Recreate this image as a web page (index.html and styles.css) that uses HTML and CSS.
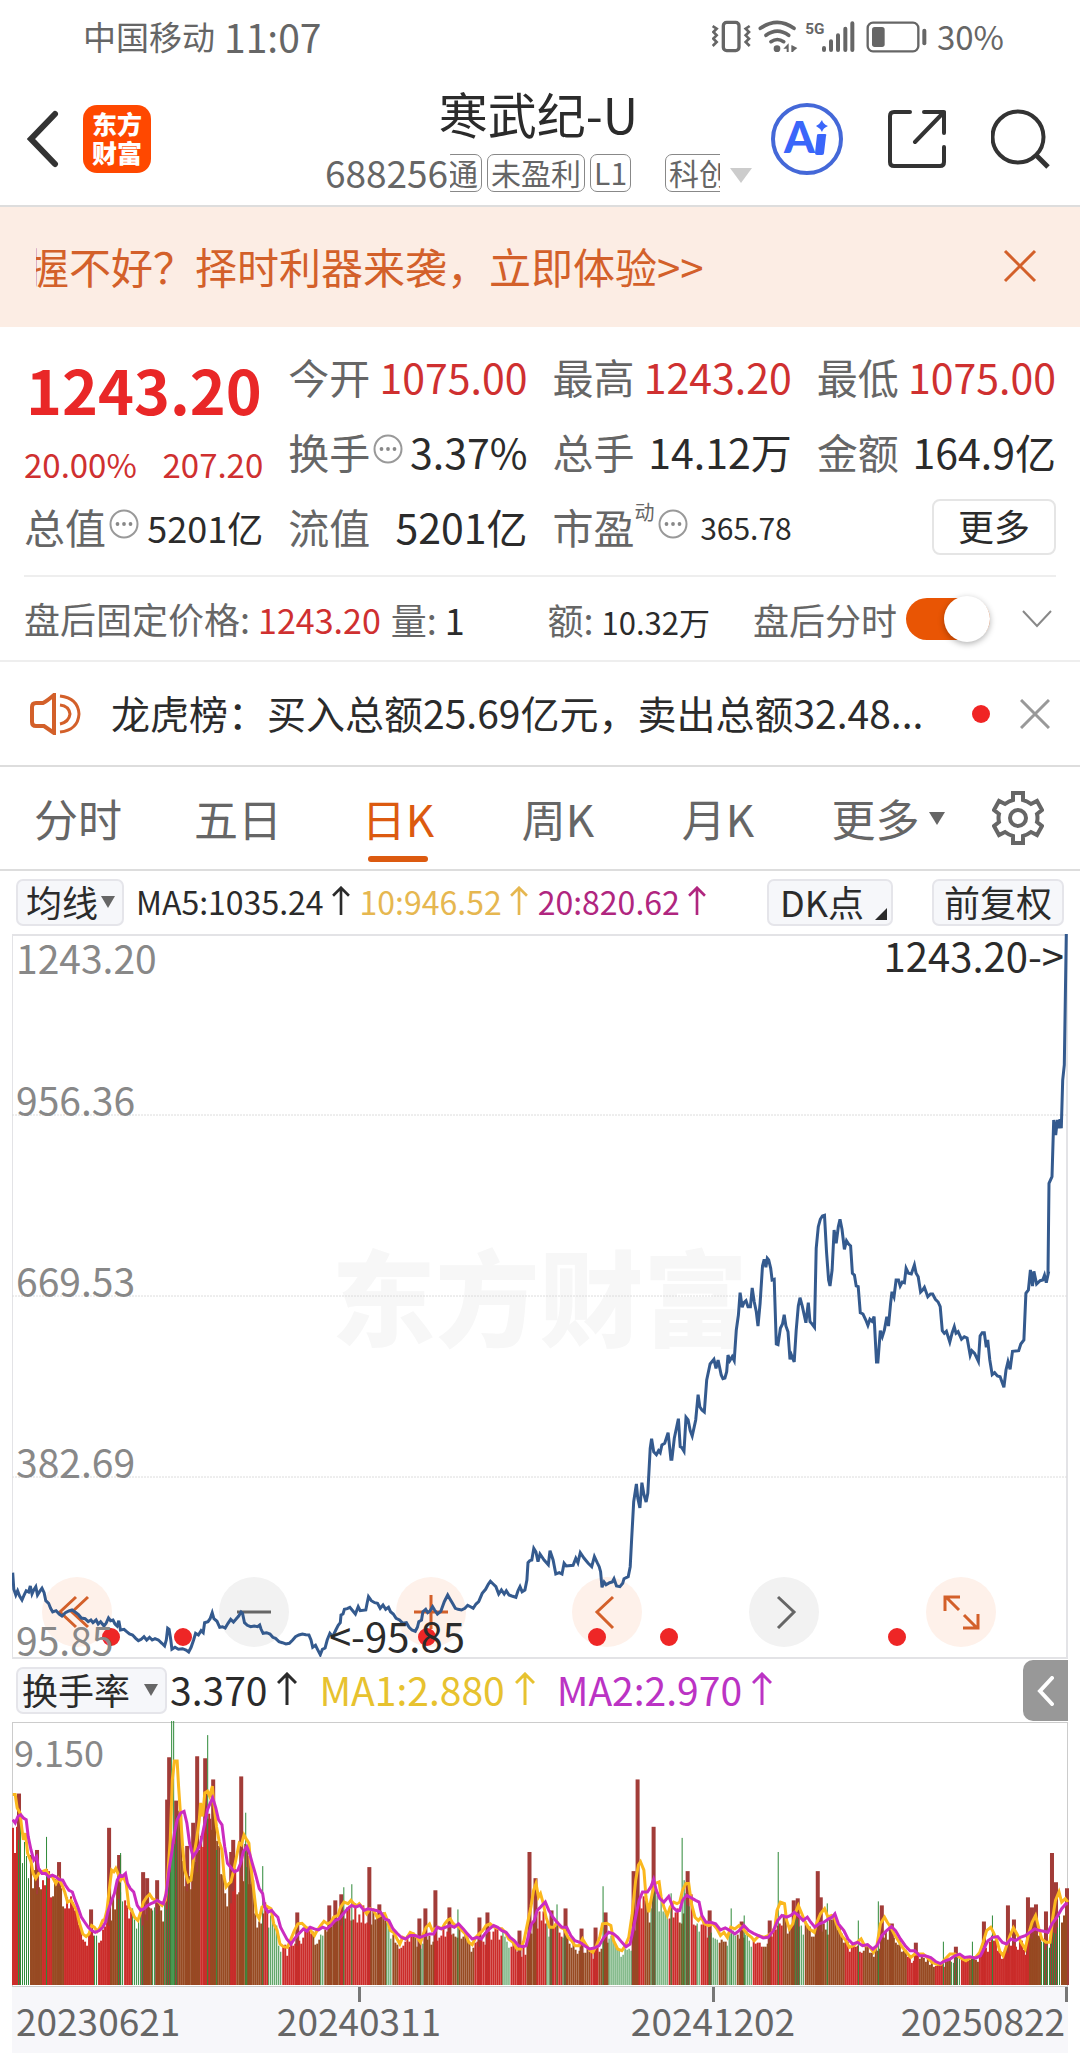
FILE: index.html
```html
<!DOCTYPE html>
<html lang="zh-CN">
<head>
<meta charset="utf-8">
<meta name="viewport" content="width=device-width, initial-scale=1">
<title>寒武纪-U 688256</title>
<link rel="stylesheet" href="styles.css">
</head>
<body>
<svg class="defs" aria-hidden="true">
  <symbol id="up" viewBox="0 0 20 34"><path d="M10 33V2M1 11L10 2L19 11" fill="none" stroke="currentColor" stroke-width="3"/></symbol>
  <symbol id="info" viewBox="0 0 30 30"><circle cx="15" cy="15" r="13.500" fill="none" stroke="#999" stroke-width="2"/><circle cx="8.500" cy="15" r="1.900" fill="#888"/><circle cx="15" cy="15" r="1.900" fill="#888"/><circle cx="21.500" cy="15" r="1.900" fill="#888"/></symbol>
</svg>

<div class="status">
  <span class="carrier">中国移动</span><span class="clock">11:07</span>
  <svg class="status-icons" viewBox="36 25 648 105" aria-label="信号与电量">
    <g fill="none" stroke="#666">
      <rect x="70" y="35" width="47" height="85" rx="10" stroke-width="10"/>
      <path d="M38 46L50 54L40 64L50 74L40 84L50 94L38 106M149 46L137 54L147 64L137 74L147 84L137 94L149 106" stroke-width="8"/>
      <path d="M181 53Q232 17 282 53M198 74Q232 49 266 74M213 93Q232 80 251 93" stroke-width="11" stroke-linecap="round"/>
      <path d="M372 112V118M393 92V118M414 74V118M436 54V118M457 38V118" stroke-width="12" stroke-linecap="round"/>
      <rect x="503" y="36" width="152" height="86" rx="16" stroke-width="7"/>
      <path d="M673 60V98" stroke-width="12" stroke-linecap="round"/>
    </g>
    <g fill="#666"><circle cx="231" cy="114" r="10"/><path d="M250 114L266 98V124H260V114zM276 104L292 112L280 122V124H274V104z"/><rect x="516" y="49" width="38" height="60" rx="8"/></g>
    <text x="316" y="71" class="net">5G</text>
  </svg>
  <span class="charge">30%</span>
</div>

<header class="top">
  <div class="top-left">
    <button class="icon-btn" aria-label="返回"><svg width="32" height="58" viewBox="0 0 32 58"><path d="M28 4L4 29L28 54" fill="none" stroke="#333" stroke-width="6" stroke-linecap="round"/></svg></button>
    <div class="brand"><span>东方财富</span></div>
  </div>
  <div class="title">
    <h1>寒武纪-U</h1>
    <div class="sub">
      <span class="code">688256</span>
      <span class="tags"><i>通</i><i>未盈利</i><i>L1</i><i class="apart">科创</i></span>
      <svg width="22" height="15" viewBox="0 0 22 15"><path d="M0 0H22L11 15z" fill="#ccc"/></svg>
    </div>
  </div>
  <div class="top-right">
    <button class="icon-btn" aria-label="Ai"><svg width="72" height="72" viewBox="0 0 72 72"><circle cx="36" cy="36" r="34" fill="#fff" stroke="#4468d8" stroke-width="4"/><text x="13" y="50" class="ai">A</text><path d="M46 32Q46 31 48 31H54Q56 31 55 33L53 50Q53 52 51 52H46Q44 52 44 50z" fill="#3a66fa"/><path d="M51 17Q52 21 57 23Q52 25 51 29Q49 25 45 23Q49 21 51 17z" fill="#3a66fa"/></svg></button>
    <button class="icon-btn" aria-label="分享"><svg width="58" height="60" viewBox="0 0 58 60"><path d="M22 3H6Q2 3 2 7V53Q2 57 6 57H52Q56 57 56 53V38M36 3H56V24M56 3L27 33" fill="none" stroke="#333" stroke-width="4" stroke-linecap="round" stroke-linejoin="round"/></svg></button>
    <button class="icon-btn" aria-label="搜索"><svg width="59" height="60" viewBox="0 0 59 60"><circle cx="27" cy="28" r="25.500" fill="none" stroke="#333" stroke-width="4"/><path d="M45 46L57 58" stroke="#333" stroke-width="5"/></svg></button>
  </div>
</header>

<div class="promo">
  <a href="#try" class="promo-text"><span>握不好？择时利器来袭，立即体验&gt;&gt;</span></a>
  <button class="icon-btn" aria-label="关闭"><svg width="34" height="34" viewBox="0 0 34 34"><path d="M2 2L32 32M32 2L2 32" stroke="#d3602a" stroke-width="3"/></svg></button>
</div>

<main>
<section class="quote">
  <div class="price">
    <strong>1243.20</strong>
    <p><span>20.00%</span><span>207.20</span></p>
  </div>
  <div class="cell"><span>今开</span><b class="red">1075.00</b></div>
  <div class="cell"><span>最高</span><b class="red">1243.20</b></div>
  <div class="cell"><span>最低</span><b class="red">1075.00</b></div>
  <div class="cell"><span>换手</span><svg class="info"><use href="#info"/></svg><b>3.37%</b></div>
  <div class="cell"><span>总手</span><b>14.12万</b></div>
  <div class="cell"><span>金额</span><b>164.9亿</b></div>
  <div class="cell"><span>总值</span><svg class="info"><use href="#info"/></svg><b class="mid">5201亿</b></div>
  <div class="cell"><span>流值</span><b>5201亿</b></div>
  <div class="cell"><span>市盈<sup>动</sup></span><svg class="info"><use href="#info"/></svg><b class="small">365.78</b></div>
  <button class="more">更多</button>
</section>

<section class="after">
  <span class="fixed">盘后固定价格: <b class="red">1243.20</b></span>
  <span class="vol">量: <b class="one">1</b></span>
  <span class="amt">额: <b>10.32万</b></span>
  <label for="ah">盘后分时</label><input type="checkbox" id="ah" class="switch" checked>
  <button class="icon-btn" aria-label="展开"><svg width="30" height="18" viewBox="0 0 30 18"><path d="M1 1L15 16L29 1" fill="none" stroke="#888" stroke-width="2"/></svg></button>
</section>

<section class="notice">
  <svg width="52" height="42" viewBox="0 0 52 42"><g fill="none" stroke="#d3602a" stroke-width="4"><path d="M24 2V40L14 33H6Q2 33 2 29V14Q2 10 6 10H13Q17 8 24 2z"/><path d="M30 3Q48 5 49 21Q48 37 30 39M30 12Q39 13 40 21Q39 29 30 31" stroke-width="3"/></g></svg>
  <a href="#billboard">龙虎榜：买入总额25.69亿元，卖出总额32.48...</a>
  <i class="dot"></i>
  <button class="icon-btn" aria-label="关闭"><svg width="30" height="30" viewBox="0 0 30 30"><path d="M1 1L29 29M29 1L1 29" stroke="#999" stroke-width="3"/></svg></button>
</section>

<nav class="tabs">
  <button>分时</button><button>五日</button><button class="on">日K</button><button>周K</button><button>月K</button>
  <button class="wide">更多<svg width="16" height="13" viewBox="0 0 16 13"><path d="M0 0H16L8 13z" fill="#666"/></svg></button>
  <button aria-label="设置"><svg width="52" height="54" viewBox="0 0 52 54"><path d="M21 2H31V9Q35 10 39 13L45 10L50 19L45 23Q46 27 45 31L50 35L45 44L39 41Q35 44 31 45V52H21V45Q17 44 13 41L7 44L2 35L7 31Q6 27 7 23L2 19L7 10L13 13Q17 10 21 9z" fill="none" stroke="#666" stroke-width="4"/><circle cx="26" cy="27" r="8" fill="none" stroke="#666" stroke-width="4"/></svg></button>
</nav>

<section class="legend">
  <span class="drop"><select aria-label="主图指标"><option>均线</option></select></span>
  <span class="ma">MA5:1035.24<svg><use href="#up"/></svg></span>
  <span class="ma ma10">10:946.52<svg><use href="#up"/></svg></span>
  <span class="ma ma20">20:820.62<svg><use href="#up"/></svg></span>
  <button class="chip dk">DK点</button>
  <button class="chip">前复权</button>
</section>

<section class="kline">
  <span class="watermark">东方财富</span>
  <div class="tools">
    <button aria-label="最早"><svg viewBox="0 0 70 70"><path d="M34 20L18 35L34 50M46 20L30 35L46 50"/></svg></button>
    <button class="plain" aria-label="缩小"><svg viewBox="0 0 70 70"><path d="M18 35H52"/></svg></button>
    <button aria-label="放大"><svg viewBox="0 0 70 70"><path d="M18 35H52M35 18V52"/></svg></button>
    <button aria-label="前移"><svg viewBox="0 0 70 70"><path d="M41 20L25 35L41 51"/></svg></button>
    <button class="plain" aria-label="后移"><svg viewBox="0 0 70 70"><path d="M29 20L45 35L29 51"/></svg></button>
    <button aria-label="全屏"><svg viewBox="0 0 70 70"><path d="M19 34V20H34M20 20L33 33M52 37V51H37M51 51L38 38"/></svg></button>
  </div>
  <svg id="price" class="plot" viewBox="0 0 1056 723" preserveAspectRatio="none">
    <path class="grid" d="M0 181H1056M0 362H1056M0 543H1056"/>
  </svg>
  <div class="scale"><span>1243.20</span><span>956.36</span><span>669.53</span><span>382.69</span><span>95.85</span></div>
  <span class="mark high">1243.20-&gt;</span>
  <span class="mark low">&lt;-95.85</span>
</section>

<section class="legend turn">
  <span class="drop"><select aria-label="副图指标"><option>换手率</option></select></span>
  <span class="ma">3.370<svg><use href="#up"/></svg></span>
  <span class="ma t1">MA1:2.880<svg><use href="#up"/></svg></span>
  <span class="ma t2">MA2:2.970<svg><use href="#up"/></svg></span>
  <button class="fold" aria-label="收起"><svg width="17" height="30" viewBox="0 0 17 30"><path d="M15 2L3 15L15 28" fill="none" stroke="#fff" stroke-width="4" stroke-linecap="round"/></svg></button>
</section>

<section class="turnover">
  <svg id="turnover" class="plot" viewBox="0 0 1056 263" preserveAspectRatio="none"></svg>
  <span class="peak">9.150</span>
</section>
<footer class="axis"><span>20230621</span><span>20240311</span><span>20241202</span><span>20250822</span></footer>
</main>
<script src="chart.js"></script>
</body>
</html>
```
FILE: styles.css
```css
* { box-sizing: border-box; }
body {
  margin: 0;
  background: #fff;
  color: #2b2b2b;
  font-family: "Noto Sans CJK SC", "Noto Sans", sans-serif;
  font-size: 36px;
  line-height: 1;
}
button, select, input { font: inherit; color: inherit; margin: 0; }
button { border: 0; background: none; padding: 0; cursor: pointer; }
a { color: inherit; text-decoration: none; }
b { font-weight: 400; color: #2b2b2b; }
i { font-style: normal; }
svg { display: block; flex: none; }
.defs { position: absolute; width: 0; height: 0; }
.icon-btn { display: flex; flex: none; }
.red { color: #cf3030; }

.status {
  display: flex;
  align-items: center;
  height: 73px;
  padding: 0 76px 0 83px;
  color: #666;
  font-size: 33px;
}
.clock { margin-left: 9px; font-size: 39px; }
.status-icons { width: 216px; height: 35px; margin-left: auto; }
.net { font: 700 46px "Liberation Sans Narrow", "Roboto", sans-serif; fill: #666; }
.charge { margin-left: 9px; }

.top {
  display: grid;
  grid-template-columns: 1fr auto 1fr;
  height: 134px;
  border-bottom: 2px solid #ddd;
  padding: 0 30px 0 27px;
}
.top-left, .top-right { display: flex; align-items: center; }
.top-left { gap: 24px; }
.top-right { justify-content: flex-end; gap: 45px; }
.brand {
  width: 68px;
  height: 68px;
  padding: 4px 9px 0;
  border-radius: 14px;
  background: #ff4800;
  color: #fff;
  font-size: 25px;
  font-weight: 900;
  line-height: 29px;
  overflow-wrap: anywhere;
}
.title { display: flex; flex-direction: column; align-items: center; }
.title h1 { margin: 14px 0 0; font-size: 49px; font-weight: 400; line-height: 52px; }
.sub { display: flex; align-items: center; margin-top: 14px; color: #666; line-height: 38px; }
.sub svg { margin: 4px 0 0 10px; }
.code { padding-bottom: 2px; font-size: 37px; }
.tags { display: flex; gap: 5px; width: 270px; margin-left: 2px; overflow: hidden; font-size: 30px; }
.tags i { flex: none; height: 38px; padding: 0 3px; border: 1px solid #888; border-radius: 7px; line-height: 34px; }
.tags i:first-child { margin-left: -6px; }
.tags .apart { margin-left: 29px; }
.ai { font: 900 44px "Lato", sans-serif; fill: #3a66fa; }

.promo {
  display: flex;
  align-items: center;
  justify-content: space-between;
  height: 120px;
  padding: 0 43px 2px 36px;
  background: #fcede4;
  color: #d3602a;
  font-size: 42px;
}
.promo-text { overflow: hidden; line-height: 60px; white-space: nowrap; }
.promo-text span { margin-left: -9px; }

.quote {
  display: grid;
  grid-template-columns: repeat(4, 1fr);
  grid-auto-rows: 75px;
  column-gap: 25px;
  margin: 0 24px;
  padding: 12px 0 11px;
  border-bottom: 2px solid #eee;
}
.price { grid-row: span 2; color: #e92727; }
.price strong { display: block; padding: 10px 0 0 2px; font-size: 61px; line-height: 80px; }
.price p { display: flex; justify-content: space-between; margin: 15px 0 0; color: #cf3030; font-size: 33px; line-height: 40px; }
.cell { display: flex; align-items: center; color: #666; font-size: 41px; white-space: nowrap; }
.cell b { margin-left: auto; font-size: 41px; }
.cell .mid { font-size: 36px; }
.cell .small { font-size: 30px; }
.cell sup { font-size: 20px; line-height: 0; vertical-align: 24px; }
.info { width: 30px; height: 30px; margin: 0 0 6px 3px; }
.more { justify-self: end; align-self: center; width: 124px; height: 56px; padding-bottom: 4px; border: 2px solid #e5e5e5; border-radius: 8px; color: #2b2b2b; }

.after {
  display: flex;
  align-items: center;
  height: 85px;
  padding: 0 28px 0 24px;
  border-bottom: 2px solid #eee;
  color: #666;
  white-space: nowrap;
}
.after b { font-size: 34px; }
.after .one { font-size: 36px; }
.vol { margin-left: 10px; }
.amt { margin-left: auto; }
.amt b { font-size: 31px; }
.after label { margin-left: 43px; }
.switch {
  appearance: none;
  position: relative;
  width: 84px;
  height: 42px;
  margin: 0 32px 0 9px;
  border-radius: 21px;
  background: #e95504;
}
.switch::after {
  content: "";
  position: absolute;
  right: 0;
  top: -2px;
  width: 46px;
  height: 46px;
  border-radius: 50%;
  background: #fff;
  box-shadow: 0 2px 6px rgba(0, 0, 0, .3);
}

.notice {
  display: flex;
  align-items: center;
  height: 105px;
  padding: 0 30px;
  border-bottom: 2px solid #ddd;
  font-size: 39px;
  white-space: nowrap;
}
.notice a { flex: 1; min-width: 0; margin-left: 29px; padding-bottom: 4px; overflow: hidden; line-height: 56px; }
.dot { width: 18px; height: 18px; margin: 0 30px 0 16px; border-radius: 50%; background: #f02424; }

.tabs {
  display: grid;
  grid-template-columns: repeat(6, 4fr) 3fr;
  height: 104px;
  border-bottom: 2px solid #ddd;
  color: #666;
  font-size: 44px;
}
.tabs button { display: flex; align-items: center; justify-content: center; gap: 9px; position: relative; padding-right: 4px; }
.tabs .wide { padding: 0 0 0 16px; }
.tabs .on { color: #dc5a10; }
.tabs .on::after { content: ""; position: absolute; bottom: 7px; width: 60px; height: 6px; border-radius: 3px; background: #dc5a10; }

.legend { display: flex; align-items: center; height: 63px; padding: 0 16px 0 16px; white-space: nowrap; }
.drop { position: relative; display: flex; }
.drop::after {
  content: "";
  position: absolute;
  right: 9px;
  top: 17px;
  border: 7px solid transparent;
  border-top: 12px solid #666;
  border-bottom: 0;
  pointer-events: none;
}
.drop select, .chip {
  appearance: none;
  height: 47px;
  border: 2px solid #e5e5ea;
  border-radius: 7px;
  background: #f6f7fa;
  color: #2b2b2b;
  line-height: 40px;
}
.drop select { width: 108px; padding: 0 0 4px 8px; }
.chip { padding-bottom: 4px; }
.ma { display: flex; align-items: center; gap: 8px; margin-left: 10px; padding-bottom: 3px; font-size: 32px; }
.drop + .ma { margin-left: 12px; }
.ma svg { width: 18px; height: 30px; }
.ma10 { color: #e6b750; }
.ma20 { color: #b0267f; }
.chip { width: 132px; margin-left: 39px; }
.dk { position: relative; width: 126px; margin-left: auto; padding-right: 16px; }
.dk::after { content: ""; position: absolute; right: 4px; bottom: 4px; border-left: 12px solid transparent; border-bottom: 12px solid #2b2b2b; }

.kline { position: relative; height: 725px; margin: 0 12px; border: 2px solid #e3e3e6; border-left-width: 1px; }
.plot { position: absolute; left: -1px; top: -2px; width: calc(100% + 3px); height: calc(100% + 2px); pointer-events: none; }
.plot path, .plot polyline { vector-effect: non-scaling-stroke; fill: none; }
.plot .grid { stroke: #dcdcdc; stroke-dasharray: 2 1; }
.line { stroke: #345a8e; stroke-width: 3px; }
.pins { stroke: #ee2626; stroke-width: 18px; stroke-linecap: round; }
.watermark { position: absolute; inset: 0; display: flex; justify-content: center; align-items: center; padding-bottom: 6px; color: #f7f7f7; font-size: 104px; font-weight: 900; }
.tools { position: absolute; inset: auto 0 10px; display: flex; justify-content: space-between; padding: 0 70px 0 29px; }
.tools button { width: 70px; height: 70px; border-radius: 50%; background: #fef1ea; color: #d3602a; }
.tools .plain { background: #f2f2f2; color: #666; }
.tools path { fill: none; stroke: currentColor; stroke-width: 3; }
.scale span { position: absolute; left: 3px; color: #888; font-size: 39px; }
.scale span:nth-child(1) { top: 2px; }
.scale span:nth-child(2) { bottom: 538px; }
.scale span:nth-child(3) { bottom: 357px; }
.scale span:nth-child(4) { bottom: 176px; }
.scale span:nth-child(5) { bottom: -2px; }
.mark { position: absolute; font-size: 40px; }
.high { top: -1px; right: 2px; }
.low { bottom: 2px; left: 30%; }

.turn .drop select { width: 151px; padding-left: 4px; }
.turn { padding-right: 12px; }
.turn .ma { gap: 10px; margin-left: 22px; font-size: 39px; }
.turn .drop + .ma { margin-left: 3px; }
.turn .ma svg { width: 20px; height: 34px; }
.turn .t1 { color: #e7c22f; }
.turn .t2 { color: #bb33c4; }
.fold { display: flex; align-items: center; justify-content: center; width: 45px; height: 61px; margin-left: auto; border-radius: 10px 0 0 10px; background: #989898; }

.turnover { position: relative; height: 265px; margin: 0 12px; border: 1px solid #ccc; }
.peak { position: absolute; left: 1px; top: 10px; color: #888; font-size: 36px; }
.red-bar { fill: #cb2c2a; }
.mix-bar { fill: #974a22; }
.tall-bar { fill: #a23c38; }
.green-bar { fill: #2f8a3a; }
.avg1 { stroke: #fbb81e; stroke-width: 3px; }
.avg2 { stroke: #cb2cc0; stroke-width: 3px; }

.axis {
  display: grid;
  grid-template-columns: 170fr 354fr 354fr 178fr;
  height: 67px;
  margin: 0 12px;
  padding-top: 15px;
  background: #f7f7fa;
  color: #666;
  font-size: 37px;
  text-align: center;
}
.axis span { position: relative; }
.axis span:first-child { padding-left: 4px; text-align: left; }
.axis span:last-child { padding-right: 3px; text-align: right; }
.axis span + span::before { content: ""; position: absolute; top: -15px; left: calc(50% - 1px); width: 3px; height: 15px; background: #777; }
.axis span:last-child::before { left: auto; right: 0; }
```
FILE: chart.js
```js
const NS = "http://www.w3.org/2000/svg";

function add(parent, tag, attrs) {
  const node = document.createElementNS(NS, tag);
  for (const key in attrs) node.setAttribute(key, attrs[key]);
  parent.appendChild(node);
}

// Series are stored as "x,y" pairs in blocks; each block has its own origin and step.
function decode(text, ox, oy, sx, sy) {
  return text.trim().split(/\s+/).map(pair => {
    const [x, y] = pair.split(",").map(Number);
    return [ox + x * sx, oy + y * sy];
  });
}
const STEP = 0.3444, THIRD = 1 / 3;

const closes = [
  ...decode(`37,98 40,148 46,165 51,152 57,168 64,180 70,165 76,152 83,156 88,138 93,162 98,150 104,140 109,165 115,155 122,145 128,158 133,182 141,190 147,205 153,216 163,212 172,222 180,228 190,218 200,213 209,210 218,216 228,224 236,234 247,236 256,245 264,240 270,248 279,240 285,252 292,245 302,258 308,250 315,234 321,242 328,240 334,252 340,258 345,242 350,270 360,268 368,275 376,282 385,285 394,295 402,302 410,298 418,290 426,300 434,292 442,300 450,296 460,300 470,310 478,318 483,300 487,265 491,268 496,300 499,328 508,322 518,328 530,326 540,330 548,336 555,322 562,300 568,280 576,285 584,272 590,278 594,248 604,245 610,236 616,218 621,236 630,244 638,262 646,260 654,264 662,250 670,238 678,246 685,238 693,228 700,216 704,220 710,248 718,256 728,260 738,258 748,260 754,255 758,268 764,280 774,278 784,282 792,292 800,295 810,305 820,308 830,312 840,310 850,300 858,290 868,285 878,282 888,284 897,285 903,300 908,322 916,316 922,328 930,344 936,328 944,324 950,300 958,280 966,290 975,270 982,256 988,248 990,225 996,222 1000,208 1008,206 1016,202 1024,212 1032,222 1040,200 1046,212 1062,210 1066,190 1070,170 1078,182 1088,188 1096,190 1104,205 1112,195 1120,208 1128,202 1134,215 1142,222 1150,235 1160,240 1170,250 1180,248 1188,262 1196,270 1206,274 1212,262 1216,245 1224,240 1228,215 1236,208 1242,218 1248,214 1256,200 1262,210 1270,222 1280,214 1290,185 1300,165 1306,176 1314,190 1322,205 1330,208 1340,210 1350,205 1358,196 1366,200 1374,205 1382,192 1390,185 1400,160 1410,148 1418,132 1424,124 1432,132 1440,140 1448,162 1456,150 1464,162 1470,152 1478,165 1486,168 1498,172 1504,152 1510,140 1516,155 1524,150 1530,120 1533,68 1538,62 1544,60 1550,25 1556,35 1562,65`, -12, 606, STEP, THIRD),
  ...decode(`0,1122 12,1140 24,1154 29,1112 38,1140 46,1182 56,1178 64,1182 70,1150 76,1158 96,1156 104,1135 110,1148 117,1118 128,1135 140,1150 150,1160 158,1130 166,1148 172,1160 176,1175 180,1222 186,1206 192,1214 202,1208 210,1206 215,1196 222,1218 232,1220 240,1210 244,1196 256,1190 262,1160 266,1080 272,965 280,912 284,955 290,984 296,908 302,945 308,966 313,940 320,805 324,776 330,815 338,824 344,812 349,818 354,795 362,790 372,758 380,838 383,838 390,775 402,716 407,800 412,803 418,814 424,712 430,720 436,752 442,768 452,720 459,644 464,680 470,690 477,696 484,600 494,552 505,538 511,565 517,540 526,585 531,596 537,594 542,575 546,525 551,542 558,530 564,542 570,450 576,405 581,338 587,382 592,368 598,362 604,380 611,380 616,324 622,365 628,395 633,438 639,370 646,258 651,238 656,262 660,235 664,240 670,265 674,300 680,298 686,492 691,494 698,445 704,432 709,404 714,438 720,455 726,538 730,525 738,546 744,450 750,378 755,353 762,380 772,428 779,368 784,425 790,432 797,442 802,205 808,140 814,118 820,108 826,106 832,215 838,300 842,318 848,270 854,150 860,190 866,140 871,118 877,148 884,208 890,182 896,192 902,198 907,280 913,285 918,318 924,320 930,398 938,402 946,420 952,436 958,418 964,424 970,410 977,546 981,546 988,452 994,470 1000,450 1007,410 1012,438 1018,370 1022,335 1028,350 1034,300 1041,300 1046,318 1052,306 1058,308 1063,265 1070,280 1078,282 1087,255 1092,280 1098,290 1105,336 1111,330 1116,322 1126,350 1134,342 1140,342 1148,358 1156,366 1162,380 1168,452 1174,460 1180,454 1190,486 1197,458 1203,440 1208,460 1214,455 1224,478 1232,470 1240,474 1249,526 1254,512 1262,520 1273,544 1278,468 1284,458 1290,458 1296,502 1300,480 1306,540 1313,584 1320,578 1328,588 1336,590 1347,622 1353,570 1359,545 1365,568 1372,514 1390,512 1396,492 1405,480 1411,340 1418,330 1424,270 1430,318 1434,274 1442,312 1452,302 1460,300 1465,286 1470,308 1476,280`, 528, 246, STEP, THIRD),
  ...decode(`264,1060 267,790 276,770 281,600 287,645 292,600 296,625 300,598 304,625 308,480 313,435 319,42`, 948, -14, THIRD, THIRD)
];

const averages = {
  avg1: [
    ...decode(`37,765 44,765 50,805 58,820 64,870 68,900 74,880 80,940 90,965 96,1000 104,1015 112,1000 120,995 134,990 142,1005 152,1010 162,1030 170,1015 180,1035 188,1055 196,1085 206,1080 214,1095 222,1110 230,1145 240,1180 250,1188 258,1180 266,1155 274,1160 282,1172 290,1160 298,1140 304,1135 310,1110 318,1040 324,990 330,995 336,985 342,1000 350,1020 358,1010 366,1030 374,1100 382,1110 390,1130 400,1140 408,1115 416,1085 426,1070 434,1062 442,1075 452,1080 460,1085 470,1095 480,1080 487,1000 494,900 500,720 506,665 514,665 518,740 522,800 530,920 536,990 546,1025 554,1020 562,950 570,900 578,840 582,790 588,830 594,760 602,755 608,770 616,740 620,790 628,860 636,905 644,930 650,1010 656,1040 664,1030 670,1025 676,1000 684,960 694,910 700,915 708,885 716,900 722,910 728,980 736,1050 744,1120 752,1135 760,1100 770,1095 778,1100 786,1105 794,1150 804,1170 812,1210 822,1218 834,1220 844,1195 854,1170 864,1150 876,1148 888,1160 900,1168 912,1185 920,1170 930,1155 940,1142 950,1150 960,1145 968,1130 980,1125 988,1100 998,1085 1010,1090 1018,1080 1026,1090 1034,1098 1042,1090 1054,1105 1064,1120 1074,1105 1084,1110 1094,1130 1104,1125 1116,1120 1124,1140 1132,1170 1142,1175 1152,1195 1160,1210 1168,1190 1178,1195 1190,1175 1200,1180 1210,1190 1220,1205 1228,1180 1236,1160 1246,1150 1254,1170 1262,1165 1272,1160 1282,1165 1290,1150 1298,1140 1306,1135 1314,1148 1322,1155 1332,1160 1340,1170 1350,1180 1360,1205 1370,1212 1380,1190 1390,1180 1400,1170 1410,1155 1422,1150 1434,1160 1446,1165 1456,1165 1466,1175 1476,1195 1488,1205 1500,1225 1510,1225 1520,1200 1530,1150 1540,1100 1548,1050 1555,1030 1562,1070`, -12, -182, STEP, THIRD),
    ...decode(`0,1060 8,1090 16,1130 26,1160 38,1160 48,1145 58,1160 68,1165 80,1190 90,1200 100,1215 112,1215 122,1195 134,1215 144,1230 152,1235 162,1215 172,1190 180,1150 192,1148 204,1155 212,1200 224,1225 236,1230 246,1215 256,1190 266,1120 276,1020 284,975 290,965 300,990 306,1070 314,1115 324,1060 332,1030 344,1025 350,1070 358,1100 368,1125 376,1100 386,1085 396,1090 404,1085 412,1050 422,1030 430,1030 438,1090 448,1130 458,1140 466,1130 476,1150 488,1155 500,1150 512,1165 522,1185 532,1175 542,1190 552,1160 564,1165 576,1155 588,1165 600,1180 612,1190 620,1200 634,1185 648,1190 660,1185 672,1175 680,1160 686,1110 696,1085 708,1090 714,1140 722,1165 732,1150 740,1115 748,1095 758,1120 768,1145 780,1165 794,1175 802,1145 812,1120 824,1105 834,1130 844,1125 852,1130 862,1160 874,1185 886,1200 896,1220 908,1215 918,1205 930,1195 940,1215 952,1215 966,1235 976,1215 986,1150 998,1130 1006,1145 1016,1160 1026,1180 1038,1200 1050,1220 1062,1235 1074,1250 1086,1240 1098,1240 1110,1240 1122,1250 1136,1265 1150,1270 1162,1270 1174,1255 1188,1240 1202,1240 1216,1250 1234,1260 1248,1250 1262,1250 1274,1235 1284,1205 1294,1170 1306,1160 1314,1175 1324,1200 1332,1230 1342,1245 1352,1215 1362,1185 1372,1162 1382,1180 1394,1205 1406,1225 1416,1180 1426,1145 1436,1125 1446,1165 1454,1195 1466,1205 1478,1205 1486,1130 1494,1080 1504,1055 1512,1085 1522,1075 1530,1085`, 528, -182, STEP, THIRD)
  ],
  avg2: [
    ...decode(`37,840 44,850 52,830 60,825 68,835 76,840 82,890 90,930 98,960 106,950 112,985 122,1000 132,1000 142,1010 152,1005 162,1010 172,1018 182,1020 190,1035 200,1050 210,1055 218,1080 226,1100 236,1130 246,1145 256,1160 266,1170 276,1175 288,1170 298,1160 306,1145 314,1110 324,1080 332,1060 340,1020 348,1005 356,1008 364,1000 370,1030 378,1045 388,1055 398,1095 408,1110 418,1105 428,1095 438,1090 448,1085 456,1080 464,1085 474,1090 482,1060 490,990 498,940 506,880 514,840 524,820 534,815 542,850 550,910 560,950 570,935 580,915 586,890 594,850 602,810 610,790 617,775 626,805 634,840 644,855 652,920 660,970 668,980 680,995 690,990 698,970 706,935 716,920 724,940 732,970 742,1005 752,1045 762,1060 768,1100 778,1115 788,1110 796,1120 806,1130 814,1160 824,1180 832,1195 844,1210 854,1195 866,1180 880,1165 890,1172 900,1160 912,1165 924,1168 936,1160 948,1165 960,1155 972,1140 984,1135 996,1120 1008,1105 1020,1095 1032,1100 1044,1095 1056,1110 1068,1105 1080,1108 1092,1110 1104,1115 1116,1135 1128,1140 1140,1165 1152,1178 1164,1190 1176,1195 1190,1185 1204,1185 1218,1190 1232,1185 1246,1180 1258,1180 1268,1160 1280,1165 1292,1160 1306,1155 1318,1160 1330,1150 1344,1165 1356,1180 1370,1195 1384,1190 1396,1195 1408,1178 1420,1165 1432,1155 1444,1160 1456,1170 1468,1175 1480,1190 1492,1200 1504,1215 1516,1218 1526,1215 1534,1180 1542,1150 1550,1140 1558,1110`, -12, -182, STEP, THIRD),
    ...decode(`0,1100 14,1085 24,1110 36,1130 48,1145 62,1160 76,1160 88,1185 100,1200 114,1205 128,1215 142,1225 156,1222 170,1215 184,1190 198,1175 212,1180 224,1190 236,1205 248,1218 260,1210 268,1170 278,1120 286,1080 296,1055 310,1055 320,1040 328,1018 336,1050 346,1075 358,1085 372,1068 384,1100 396,1112 404,1110 412,1080 424,1065 436,1072 450,1080 460,1085 468,1125 480,1145 494,1145 508,1150 522,1168 536,1162 550,1170 564,1180 576,1170 590,1155 604,1170 618,1178 632,1185 646,1192 660,1190 676,1170 688,1140 700,1125 714,1130 726,1125 736,1115 748,1125 762,1140 774,1130 784,1145 796,1160 808,1150 822,1145 836,1135 846,1130 854,1120 864,1150 880,1170 892,1195 906,1210 920,1205 934,1215 948,1212 964,1225 976,1215 990,1185 1004,1170 1018,1158 1030,1170 1044,1195 1058,1215 1072,1230 1086,1230 1100,1245 1116,1245 1132,1250 1146,1262 1160,1268 1174,1260 1188,1255 1202,1245 1216,1240 1230,1250 1246,1248 1262,1252 1276,1245 1286,1225 1298,1200 1312,1190 1326,1188 1340,1205 1352,1210 1364,1195 1378,1200 1392,1190 1406,1185 1420,1175 1434,1165 1448,1170 1460,1172 1472,1175 1484,1150 1498,1130 1512,1105 1524,1090 1530,1090`, 528, -182, STEP, THIRD)
  ]
};

const redPeaks = [
  ...decode(`55,762 107,930 171,966 264,1107 317,865 345,945 415,996 426,1014 456,1020 485,780 490,655 510,783 543,918 561,850 572,650 595,657 607,838 618,720 670,936 676,900 700,710 722,1032 862,1117 955,1095 972,1080 990,1062 1071,982 1100,1092 1218,1134 1234,1105 1263,1050 1304,1102 1392,1132 1413,1117 1508,1170 1536,936 1553,1014`, -12, -182, STEP, THIRD),
  ...decode(`33,1110 72,1104 119,1164 160,1161 189,1116 270,993 281,720 328,861 427,993 491,1110 583,1143 665,1140 734,1080 746,1074 804,993 812,1072 990,1095 1019,1150 1088,1206 1205,1218 1287,1143 1356,1095 1373,1137 1413,1072 1426,1100 1437,1092 1466,1113 1484,940 1496,1026 1528,1045`, 528, -182, STEP, THIRD)
];
const greenPeaks = [
  ...decode(`135,890 349,938 497,545 501,545 600,588 628,930 710,820 715,980 762,978 995,1040 1018,1033 1326,1108`, -12, -182, STEP, THIRD),
  ...decode(`47,1092 181,1038 378,1060 408,894 414,1020 553,1104 588,1125 687,936 831,1090 919,1140 978,1083 1168,1203 1250,1203 1309,1125`, 528, -182, STEP, THIRD)
];

const toPoints = list => list.map(p => p[0].toFixed(1) + "," + p[1].toFixed(1)).join(" ");

const price = document.getElementById("price");
add(price, "polyline", { class: "line", points: toPoints(closes) });
add(price, "path", { class: "pins", d: [99, 171, 415, 585, 657, 885].map(x => `M${x} 703h.01`).join("") });

const chart = document.getElementById("turnover");
const BASE = 262;
function bar(kind, x, y, w) {
  add(chart, "rect", { class: kind + "-bar", x: x, y: y, width: w, height: BASE - y });
}
function levelAt(list, x) {
  const i = list.findIndex(p => p[0] >= x);
  if (i < 1) return list[i < 0 ? list.length - 1 : 0][1];
  const a = list[i - 1], b = list[i];
  return a[1] + (b[1] - a[1]) * (x - a[0]) / (b[0] - a[0]);
}

// Background stripes follow the slow average with a repeatable jitter.
let seed = 20250822;
function random() {
  seed = (seed * 1103515245 + 12345) % 2147483648;
  return seed / 2147483648;
}
redPeaks.forEach(([x, y]) => bar("tall", Math.round(x) - 2, Math.round(y), 4));
let kind = "mix", left = 0;
for (let x = 0; x < 1054; x += 2) {
  if (left-- <= 0) {
    const r = random();
    kind = r < 0.34 ? "red" : r < 0.72 ? "mix" : "green";
    left = Math.floor((kind === "green" ? 1 : 2) + random() * 4);
  }
  const level = Math.max(levelAt(averages.avg1, x), levelAt(averages.avg2, x));
  const h = (BASE - level) * (0.78 + random() * 0.28);
  bar(kind, x, Math.round(BASE - h), kind === "green" ? 1 : 2);
}
greenPeaks.forEach(([x, y]) => bar("green", Math.round(x), Math.max(0, Math.round(y)), 1));
for (const name in averages) add(chart, "polyline", { class: name, points: toPoints(averages[name]) });
```
